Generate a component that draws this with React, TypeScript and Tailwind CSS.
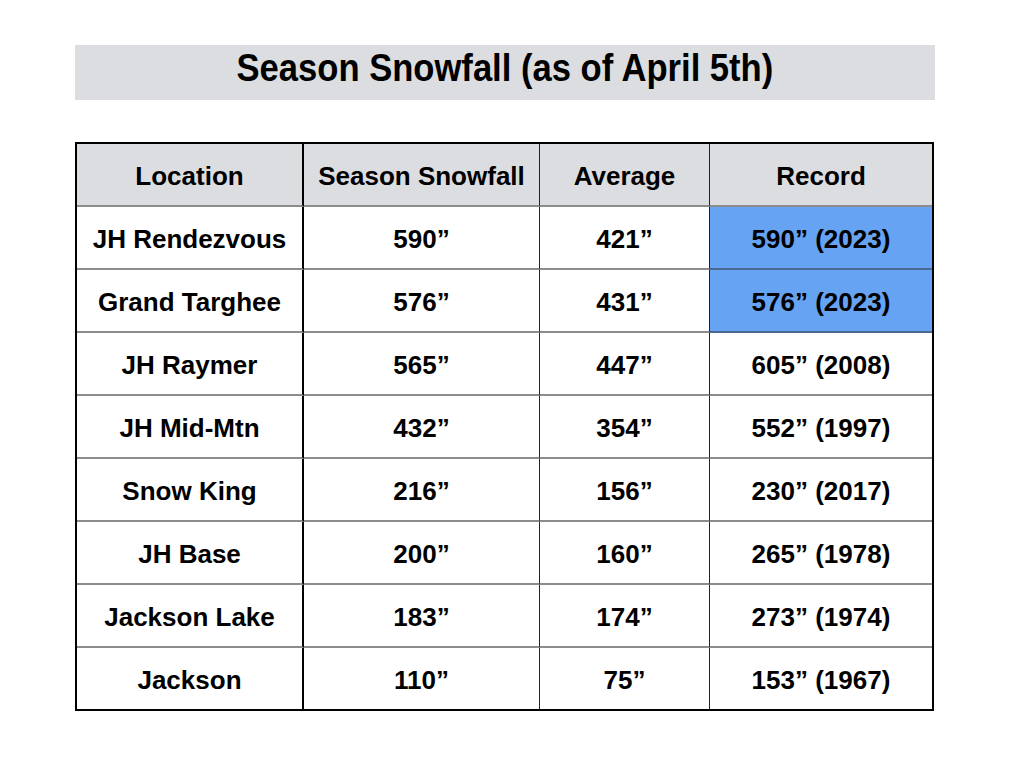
const rows = [
  { location: "JH Rendezvous", season: "590”", average: "421”", record: "590” (2023)", highlight: true },
  { location: "Grand Targhee", season: "576”", average: "431”", record: "576” (2023)", highlight: true },
  { location: "JH Raymer", season: "565”", average: "447”", record: "605” (2008)" },
  { location: "JH Mid-Mtn", season: "432”", average: "354”", record: "552” (1997)" },
  { location: "Snow King", season: "216”", average: "156”", record: "230” (2017)" },
  { location: "JH Base", season: "200”", average: "160”", record: "265” (1978)" },
  { location: "Jackson Lake", season: "183”", average: "174”", record: "273” (1974)" },
  { location: "Jackson", season: "110”", average: "75”", record: "153” (1967)" },
];

const cols = "grid grid-cols-[227px_236px_170px_222px]";

export default function App() {
  return (
    <div className="w-[1024px] h-[768px] bg-white pt-[45px] px-[75px] text-black font-['Liberation_Sans',Arial,sans-serif]">
      {/* Title */}
      <div className="w-[860px] h-[55px] bg-[#dcdde0] flex items-center justify-center pb-2">
        <h1 className="text-[38px] font-bold leading-normal scale-x-[0.91] whitespace-nowrap">
          Season Snowfall (as of April 5th)
        </h1>
      </div>

      {/* Table */}
      <div className="mt-[42px] w-[859px] border-2 border-black text-[26px] font-bold">
        <div className={`${cols} h-[63px] bg-[#dcdde0]`}>
          <div className="flex items-center justify-center pt-1 border-r-2 border-r-black border-b-2 border-b-[#8c8c8c]">Location</div>
          <div className="flex items-center justify-center pt-1 border-r border-r-[#222] border-b-2 border-b-[#8c8c8c]">Season Snowfall</div>
          <div className="flex items-center justify-center pt-1 border-r border-r-[#222] border-b-2 border-b-[#8c8c8c]">Average</div>
          <div className="flex items-center justify-center pt-1 border-b-2 border-b-[#8c8c8c]">Record</div>
        </div>
        {rows.map((r, i) => {
          const last = i === rows.length - 1;
          const bottom = last ? "" : "border-b-2 border-b-[#8c8c8c]";
          return (
            <div key={r.location} className={`${cols} ${last ? "h-[61px]" : "h-[63px]"}`}>
              <div className={`flex items-center justify-center pt-1 border-r-2 border-r-black ${bottom}`}>{r.location}</div>
              <div className={`flex items-center justify-center pt-1 border-r border-r-[#222] ${bottom}`}>{r.season}</div>
              <div className={`flex items-center justify-center pt-1 border-r border-r-[#222] ${bottom}`}>{r.average}</div>
              <div
                className={`flex items-center justify-center pt-1 ${
                  r.highlight ? "bg-[#66a3f2] border-b-2 border-b-[#4b6890]" : bottom
                }`}
              >
                {r.record}
              </div>
            </div>
          );
        })}
      </div>
    </div>
  );
}
